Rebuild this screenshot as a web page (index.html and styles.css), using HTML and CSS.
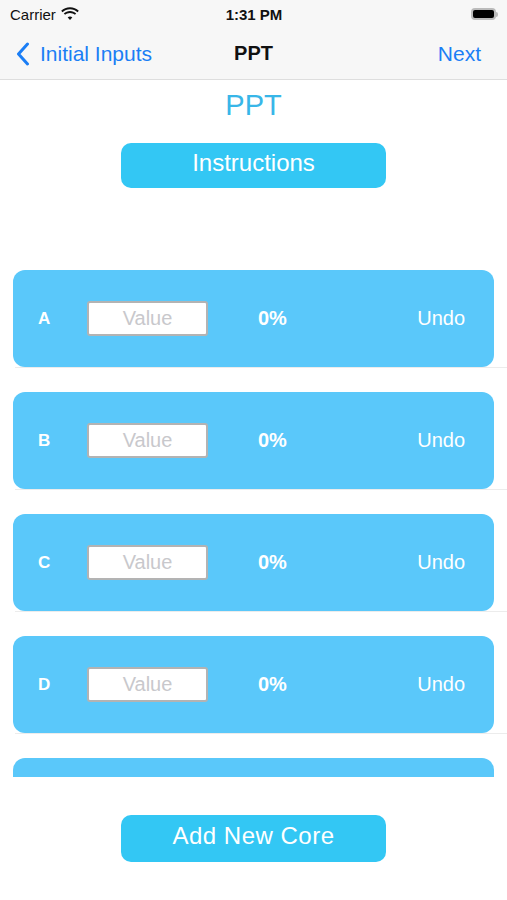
FILE: index.html
```html
<!DOCTYPE html>
<html lang="en">
<head>
    <meta charset="UTF-8">
    <meta name="viewport" content="width=device-width, initial-scale=1.0">
    <title>PPT</title>
    <link rel="stylesheet" href="styles.css">
</head>
<body>
    <div class="top">
        <div class="status">
            <div class="carrier">
                Carrier
                <svg class="wifi" width="18" height="13" viewBox="0 0 18 13">
                    <path d="M9 2.2c2.9 0 5.5 1.1 7.5 3l1.3-1.4C15.5 1.6 12.4 0.3 9 0.3S2.5 1.6 0.2 3.8l1.3 1.4c2-1.9 4.6-3 7.5-3z" fill="#111"/>
                    <path d="M9 5.9c1.9 0 3.6 0.7 4.9 1.9l1.3-1.4C13.6 4.9 11.4 4 9 4S4.4 4.9 2.8 6.4l1.3 1.4C5.4 6.6 7.1 5.9 9 5.9z" fill="#111"/>
                    <path d="M9 9.6c0.9 0 1.7 0.3 2.3 0.9L9 13 6.7 10.5C7.3 9.9 8.1 9.6 9 9.6z" fill="#111"/>
                </svg>
            </div>
            <div class="time">1:31 PM</div>
            <div class="battery"><span class="cell"></span><span class="nub"></span></div>
        </div>
        <div class="nav">
            <a class="back">
                <svg width="14" height="24" viewBox="0 0 14 24">
                    <path d="M11.5 2 L2.5 12 L11.5 22" fill="none" stroke="#1b7ef5" stroke-width="3" stroke-linecap="round" stroke-linejoin="round"/>
                </svg>
                Initial Inputs
            </a>
            <div class="nav-title">PPT</div>
            <a class="next">Next</a>
        </div>
    </div>

    <h1 class="title">PPT</h1>
    <button class="btn">Instructions</button>

    <div class="list">
        <div class="row">
            <div class="card">
                <span class="letter">A</span>
                <input class="value" type="text" placeholder="Value">
                <span class="pct">0%</span>
                <span class="undo">Undo</span>
            </div>
        </div>
        <div class="row">
            <div class="card">
                <span class="letter">B</span>
                <input class="value" type="text" placeholder="Value">
                <span class="pct">0%</span>
                <span class="undo">Undo</span>
            </div>
        </div>
        <div class="row">
            <div class="card">
                <span class="letter">C</span>
                <input class="value" type="text" placeholder="Value">
                <span class="pct">0%</span>
                <span class="undo">Undo</span>
            </div>
        </div>
        <div class="row">
            <div class="card">
                <span class="letter">D</span>
                <input class="value" type="text" placeholder="Value">
                <span class="pct">0%</span>
                <span class="undo">Undo</span>
            </div>
        </div>
        <!-- next row scrolled out of view -->
        <div class="row">
            <div class="card"></div>
        </div>
    </div>

    <button class="btn btn-add">Add New Core</button>
</body>
</html>
```

FILE: styles.css
```css
body {
    margin: 0;
    width: 507px;
    height: 900px;
    overflow: hidden;
    background: #fff;
    font-family: "Liberation Sans", Arial, sans-serif;
}
.top {
    background: #f7f7f7;
    border-bottom: 1px solid #dedede;
    height: 79px;
}
.status {
    height: 28px;
    display: flex;
    align-items: center;
    justify-content: space-between;
    padding: 0 9px 0 10px;
    font-size: 15px;
    color: #111;
}
.carrier {
    display: flex;
    align-items: center;
    gap: 5px;
    width: 120px;
}
.wifi {
    margin-top: -2px;
}
.time {
    font-weight: bold;
}
.battery {
    width: 120px;
    display: flex;
    justify-content: flex-end;
    align-items: center;
}
.cell {
    width: 21px;
    height: 8px;
    background: #000;
    border: 2px solid #bbb;
    border-radius: 4px;
}
.nub {
    width: 2px;
    height: 5px;
    background: #bbb;
    border-radius: 0 2px 2px 0;
}
.nav {
    height: 51px;
    display: grid;
    grid-template-columns: 1fr auto 1fr;
    align-items: center;
    padding: 0 16px;
    font-size: 21px;
}
.back, .next {
    color: #1b7ef5;
    display: flex;
    align-items: center;
    gap: 10px;
}
.next {
    justify-self: end;
    margin-right: 10px;
}
.nav-title {
    font-weight: bold;
    font-size: 20px;
    color: #111;
}
.title {
    margin: 6px 0 0;
    height: 38px;
    line-height: 38px;
    text-align: center;
    font-weight: normal;
    font-size: 29px;
    color: #38b6e8;
}
.btn {
    display: block;
    margin: 19px auto 0;
    width: 265px;
    height: 45px;
    border: none;
    border-radius: 10px;
    background: #33c7f4;
    color: #fff;
    font-family: "Liberation Sans", Arial, sans-serif;
    font-size: 24px;
    padding: 0 0 5px;
}
.list {
    margin-top: 58px;
    height: 531px;
    overflow: hidden;
}
.row {
    margin-left: 15px;
    padding-top: 24px;
    border-bottom: 1px solid #ececec;
}
.card {
    margin: 0 13px 0 -2px;
    height: 97px;
    background: #5ac8fa;
    border-radius: 12px;
    display: flex;
    align-items: center;
    padding: 0 29px 0 25px;
    color: #fff;
    font-size: 20px;
}
.letter {
    width: 49px;
    font-weight: bold;
    font-size: 17px;
}
.value {
    box-sizing: border-box;
    width: 121px;
    height: 35px;
    border: 2px solid #b3b3b3;
    border-radius: 3px;
    background: #fff;
    text-align: center;
    font-family: "Liberation Sans", Arial, sans-serif;
    font-size: 20px;
    padding: 0;
}
.value::placeholder {
    color: #c8c8cc;
}
.pct {
    margin-left: 50px;
    font-weight: bold;
}
.undo {
    margin-left: auto;
}
.btn-add {
    margin-top: 38px;
    height: 47px;
    letter-spacing: 0.5px;
}
```
